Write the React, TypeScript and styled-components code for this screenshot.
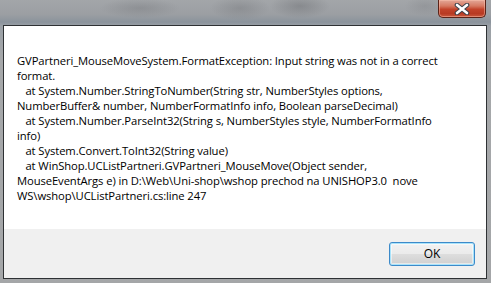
import React from 'react';
import styled, { createGlobalStyle } from 'styled-components';

const GlobalStyle = createGlobalStyle`
  html, body {
    margin: 0;
    padding: 0;
    overflow: hidden;
  }
  body {
    font-family: 'Segoe UI', 'Open Sans', sans-serif;
  }
`;

const Frame = styled.div`
  display: flex;
  flex-direction: column;
  width: 491px;
  height: 283px;
  box-sizing: border-box;
  padding: 0 4px 4px 3px;
  background:
    radial-gradient(ellipse 40px 10px at 140px 8px, rgba(110, 112, 116, 0.35), transparent),
    radial-gradient(ellipse 30px 12px at 240px 8px, rgba(100, 102, 106, 0.3), transparent),
    radial-gradient(ellipse 30px 12px at 300px 6px, rgba(90, 92, 96, 0.35), transparent),
    radial-gradient(ellipse 20px 10px at 425px 6px, rgba(120, 122, 126, 0.3), transparent),
    linear-gradient(180deg, #a3a6a9 0px, #9c9fa3 14px, #8b939c 22px, #9aa0a6 26px, #a6a8aa 60px, #a4a6a8 100%);
`;

const TitleBar = styled.div`
  display: flex;
  justify-content: flex-end;
  align-items: flex-start;
  height: 25px;
  flex-shrink: 0;
`;

const CloseButton = styled.div`
  display: flex;
  align-items: center;
  justify-content: center;
  width: 48px;
  height: 18px;
  margin-right: 1px;
  box-sizing: border-box;
  border: 1px solid #5b2318;
  border-top: none;
  border-radius: 0 0 5px 5px;
  background: linear-gradient(
    180deg,
    #e3a797 0%,
    #d67a63 35%,
    #c2432a 55%,
    #b83a22 80%,
    #c9593e 100%
  );
  box-shadow: inset 0 0 0 1px rgba(255, 200, 180, 0.45);
`;

const Client = styled.div`
  display: flex;
  flex-direction: column;
  flex: 1;
  border: 1px solid #2e3134;
  background: #ffffff;
`;

const Body = styled.div`
  flex: 1;
  padding: 27px 12px 0 13px;
  background: #ffffff;
`;

const Line = styled.div`
  font-family: 'Segoe UI', 'Open Sans', sans-serif;
  font-size: 11.25px;
  line-height: 15px;
  color: #000000;
  white-space: pre;
  letter-spacing: -0.1px;
`;

const Footer = styled.div`
  display: flex;
  justify-content: flex-end;
  align-items: center;
  height: 49px;
  padding-right: 11px;
  background: #f0f0f0;
`;

const Button = styled.div`
  display: flex;
  align-items: center;
  justify-content: center;
  width: 86px;
  height: 24px;
  box-sizing: border-box;
  border: 1px solid #3c8ac9;
  border-radius: 3px;
  background: linear-gradient(180deg, #f2f2f2 0%, #ebebeb 48%, #dddddd 52%, #cfcfcf 100%);
  box-shadow: inset 0 0 0 1px #a8e3fb, inset 0 0 0 2px rgba(255, 255, 255, 0.5);
  font-family: 'Segoe UI', 'Open Sans', sans-serif;
  font-size: 12px;
  color: #000000;
`;

const lines = [
  'GVPartneri_MouseMoveSystem.FormatException: Input string was not in a correct',
  'format.',
  '   at System.Number.StringToNumber(String str, NumberStyles options,',
  'NumberBuffer& number, NumberFormatInfo info, Boolean parseDecimal)',
  '   at System.Number.ParseInt32(String s, NumberStyles style, NumberFormatInfo',
  'info)',
  '   at System.Convert.ToInt32(String value)',
  '   at WinShop.UCListPartneri.GVPartneri_MouseMove(Object sender,',
  'MouseEventArgs e) in D:\\Web\\Uni-shop\\wshop prechod na UNISHOP3.0  nove',
  'WS\\wshop\\UCListPartneri.cs:line 247',
];

export default function App() {
  return (
    <>
      <GlobalStyle />
      <Frame>
        <TitleBar>
          <CloseButton>
            <svg width="16" height="12" viewBox="0 0 16 12">
              <path d="M3 2 L13 10 M13 2 L3 10" stroke="#3a3f48" strokeWidth="4.6" strokeLinecap="round" />
              <path d="M3 2 L13 10 M13 2 L3 10" stroke="#ffffff" strokeWidth="2.6" strokeLinecap="round" />
            </svg>
          </CloseButton>
        </TitleBar>
        <Client>
          <Body>
            {lines.map((l, i) => (
              <Line key={i}>{l}</Line>
            ))}
          </Body>
          <Footer>
            <Button>OK</Button>
          </Footer>
        </Client>
      </Frame>
    </>
  );
}
